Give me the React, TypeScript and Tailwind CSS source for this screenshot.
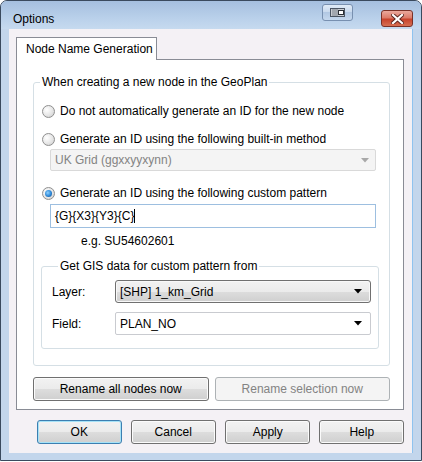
import React from 'react';

const font = { fontFamily: '"Liberation Sans", Arial, sans-serif' };

const Arrow = ({ color = '#000' }: { color?: string }) => (
  <svg width="8" height="5" viewBox="0 0 8 5" className="shrink-0">
    <path d="M0 0 H8 L4 4.5 Z" fill={color} />
  </svg>
);

const Radio = ({ checked = false }: { checked?: boolean }) => (
  <span className="w-[13px] h-[13px] shrink-0 rounded-full border border-[#8f8f8f] bg-[radial-gradient(circle_at_35%_35%,#ffffff_0%,#e6e6e6_55%,#c9c9c9_100%)] flex items-center justify-center">
    {checked && (
      <span className="w-[7px] h-[7px] rounded-full bg-[radial-gradient(circle_at_40%_40%,#8fd1ff_0%,#2a86d6_55%,#14477f_100%)]" />
    )}
  </span>
);

const RadioRow = ({ label, checked }: { label: string; checked?: boolean }) => (
  <div className="flex items-center gap-[5px] h-[16px] pl-[8px]">
    <Radio checked={checked} />
    <span>{label}</span>
  </div>
);

const Button = ({
  label,
  className = '',
  isDefault = false,
  disabled = false,
}: {
  label: string;
  className?: string;
  isDefault?: boolean;
  disabled?: boolean;
}) => {
  if (disabled) {
    return (
      <div className={`h-[24px] rounded-[3px] border border-[#adb2b5] bg-[#f4f4f4] text-[#838383] flex items-center justify-center ${className}`}>
        {label}
      </div>
    );
  }
  return (
    <div
      className={`h-[24px] rounded-[3px] border ${
        isDefault ? 'border-[#3c7fb1] shadow-[inset_0_0_0_1px_#a6e2f7]' : 'border-[#707070] shadow-[inset_0_0_0_1px_#fbfbfb]'
      } bg-[linear-gradient(to_bottom,#f2f2f2_0%,#ebebeb_50%,#dddddd_50%,#cfcfcf_100%)] flex items-center justify-center ${className}`}
    >
      {label}
    </div>
  );
};

export default function App() {
  return (
    <div className="w-[422px] h-[462px] bg-white text-[12px] text-black" style={font}>
      <div className="w-[422px] h-[461px] border border-[#3a4a5e] rounded-t-[7px] bg-[#c3d6ec] flex flex-col">
        {/* Title bar */}
        <div className="h-[28px] shrink-0 rounded-t-[6px] bg-[linear-gradient(to_bottom,#a5bfdf_0%,#b9d0ea_60%,#c6daef_100%)] flex items-start">
          <span className="pl-[12px] pt-[9px] text-[12px] text-black">Options</span>
          <div className="ml-auto flex items-start pt-[3px]">
            <div className="w-[31px] h-[17px] rounded-[3px] border border-[#7890b0] bg-[linear-gradient(to_bottom,#e0ebf7_0%,#c7d8ed_50%,#b2c8e3_50%,#c5d8ee_100%)] flex items-center justify-center">
              <svg width="15" height="9" viewBox="0 0 15 9">
                <rect x="0.5" y="0.5" width="14" height="8" fill="#c8ccd2" stroke="#4b5563" />
                <path d="M3 1 V8 M5 1 V8 M7 1 V8" stroke="#7d838c" strokeWidth="1" />
                <rect x="8.5" y="2.5" width="5" height="4" fill="#ffffff" stroke="#2b2f36" />
              </svg>
            </div>
            <div className="ml-[28px] mt-[6px] w-[32px] h-[17px] rounded-[3px] border border-[#7a3127] bg-[linear-gradient(to_bottom,#eaa99d_0%,#dc7b69_45%,#c8432c_55%,#d66f52_100%)] flex items-center justify-center">
              <svg width="13" height="10" viewBox="0 0 13 10">
                <path d="M2 1 L11 9 M11 1 L2 9" stroke="#5b2620" strokeWidth="4" strokeLinecap="square" />
                <path d="M2 1 L11 9 M11 1 L2 9" stroke="#ffffff" strokeWidth="2.2" strokeLinecap="square" />
              </svg>
            </div>
            <div className="w-[8px]" />
          </div>
        </div>

        {/* Client area */}
        <div className="mx-[8px] h-[424px] bg-[#f4f1f5] border-r border-[#8fc3ef] flex flex-col pt-[8px] pl-[7px] pr-[8px]">
          <div className="w-[141px] h-[23px] -mb-px relative bg-white border border-b-0 border-[#898c95] flex items-center pl-[9px]">
            Node Name Generation
          </div>
          <div className="h-[351px] bg-white border border-[#898c95] pt-[14px] pl-[16px] pr-[13px]">
            <fieldset className="border border-[#d5dfe5] rounded-[3px] pl-0 pr-[13px] pb-[16px]">
              <legend className="ml-[6px] px-[2px] h-[16px] leading-[16px]">When creating a new node in the GeoPlan</legend>
              <div className="mt-[13px]">
                <RadioRow label="Do not automatically generate an ID for the new node" />
              </div>
              <div className="mt-[12px]">
                <RadioRow label="Generate an ID using the following built-in method" />
              </div>
              <div className="mt-[2px] ml-[16px] h-[22px] border border-[#d9d9d9] rounded-[2px] bg-[#f4f4f4] text-[#838383] flex items-center pl-[4px] pr-[6px]">
                <span className="flex-1">UK Grid (ggxxyyxynn)</span>
                <Arrow color="#a8a8a8" />
              </div>
              <div className="mt-[14px]">
                <RadioRow label="Generate an ID using the following custom pattern" checked />
              </div>
              <div className="mt-[3px] ml-[16px] h-[24px] border border-[#9dbfe0] bg-white flex items-center pl-[4px]">
                <span>{'{G}{X3}{Y3}{C}'}</span>
                <span className="w-px h-[14px] bg-black" />
              </div>
              <div className="mt-[5px] pl-[47px] h-[16px] leading-[16px]">e.g. SU54602601</div>
              <fieldset className="mt-[9px] ml-[7px] mr-[-3px] border border-[#d5dfe5] rounded-[3px] pl-[10px] pr-[7px] pb-[13px]">
                <legend className="ml-[6px] px-[2px] h-[16px] leading-[16px]">Get GIS data for custom pattern from</legend>
                <div className="mt-[6px] flex items-center">
                  <span className="w-[63px]">Layer:</span>
                  <div className="flex-1 h-[23px] rounded-[3px] border border-[#707070] shadow-[inset_0_0_0_1px_#f8f8f8] bg-[linear-gradient(to_bottom,#f2f2f2_0%,#ebebeb_50%,#dddddd_50%,#cfcfcf_100%)] flex items-center pl-[4px] pr-[8px]">
                    <span className="flex-1">[SHP] 1_km_Grid</span>
                    <Arrow />
                  </div>
                </div>
                <div className="mt-[9px] flex items-center">
                  <span className="w-[63px]">Field:</span>
                  <div className="flex-1 h-[23px] rounded-[2px] border border-[#c9cbd0] bg-white flex items-center pl-[4px] pr-[8px]">
                    <span className="flex-1">PLAN_NO</span>
                    <Arrow />
                  </div>
                </div>
              </fieldset>
            </fieldset>
            <div className="mt-[11px] flex gap-[6px]">
              <Button label="Rename all nodes now" className="w-[176px]" />
              <Button label="Rename selection now" className="w-[176px]" disabled />
            </div>
          </div>
          <div className="mt-[10px] pl-[21px] flex gap-[9px]">
            <Button label="OK" className="w-[86px]" isDefault />
            <Button label="Cancel" className="w-[87px]" />
            <Button label="Apply" className="w-[87px]" />
            <Button label="Help" className="w-[86px]" />
          </div>
        </div>
      </div>
    </div>
  );
}
